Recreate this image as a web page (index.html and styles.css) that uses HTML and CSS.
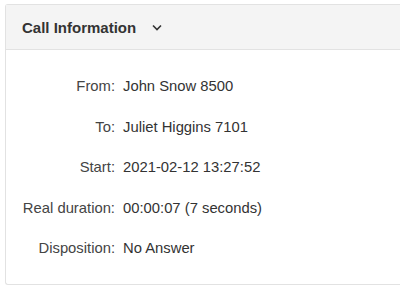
FILE: index.html
```html
<!DOCTYPE html>
<html lang="en">
<head>
  <meta charset="UTF-8" />
  <title>Call Information</title>
  <link rel="stylesheet" href="styles.css">
</head>
<body>
  <div class="panel">
    <div class="panel-header">
      <span class="panel-title">Call Information</span>
      <svg class="chevron" width="10" height="7" viewBox="0 0 10 7">
        <path d="M1 1.5 L5 5.5 L9 1.5" fill="none" stroke="#333" stroke-width="1.6"/>
      </svg>
    </div>
    <div class="panel-body">
      <div class="info-label">From:</div>
      <div class="info-value">John Snow 8500</div>
      <div class="info-label">To:</div>
      <div class="info-value">Juliet Higgins 7101</div>
      <div class="info-label">Start:</div>
      <div class="info-value">2021-02-12 13:27:52</div>
      <div class="info-label">Real duration:</div>
      <div class="info-value">00:00:07 (7 seconds)</div>
      <div class="info-label">Disposition:</div>
      <div class="info-value">No Answer</div>
    </div>
  </div>
</body>
</html>
```

FILE: styles.css
```css
body {
  margin: 0;
  padding: 4px 0 0 5px;
  background: #fff;
  font-family: "Liberation Sans", Arial, sans-serif;
  color: #333;
}

/* panel runs off the right edge in the original, so no right border */
.panel {
  border: 1px solid #e2e2e2;
  border-right: none;
  border-radius: 3px 0 0 3px;
  background: #fff;
}

.panel-header {
  height: 44px;
  display: flex;
  align-items: center;
  gap: 16px;
  padding: 0 16px;
  background: #f4f4f4;
  border-bottom: 1px solid #e2e2e2;
}

.panel-title {
  font-size: 15px;
  font-weight: bold;
  color: #333;
}

.chevron {
  margin-top: 1px;
}

.panel-body {
  display: grid;
  grid-template-columns: 94px auto;
  column-gap: 8px;
  grid-auto-rows: 40.5px;
  align-items: center;
  padding: 16px 16px 15px 15px;
  font-size: 14.8px;
}

.info-label {
  text-align: right;
  white-space: nowrap;
  color: #444;
}

.info-value {
  white-space: nowrap;
  color: #333;
}
```
